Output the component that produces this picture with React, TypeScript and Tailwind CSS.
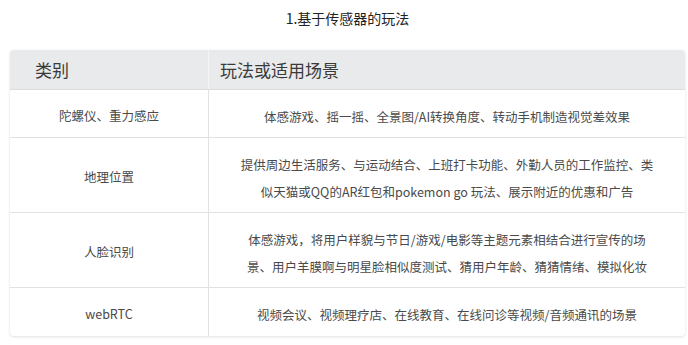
import React from "react";

const rows: { k: string; v: string[]; h: string }[] = [
  { k: "陀螺仪、重力感应", v: ["体感游戏、摇一摇、全景图/AI转换角度、转动手机制造视觉差效果"], h: "h-[48px]" },
  {
    k: "地理位置",
    v: [
      "提供周边生活服务、与运动结合、上班打卡功能、外勤人员的工作监控、类",
      "似天猫或QQ的AR红包和pokemon go 玩法、展示附近的优惠和广告",
    ],
    h: "h-[75px]",
  },
  {
    k: "人脸识别",
    v: [
      "体感游戏，将用户样貌与节日/游戏/电影等主题元素相结合进行宣传的场",
      "景、用户羊膜啊与明星脸相似度测试、猜用户年龄、猜猜情绪、模拟化妆",
    ],
    h: "h-[75px]",
  },
  { k: "webRTC", v: ["视频会议、视频理疗店、在线教育、在线问诊等视频/音频通讯的场景"], h: "h-[48px]" },
];

export default function App() {
  return (
    <div
      className="w-[688px] h-[345px] bg-white overflow-hidden"
      style={{ fontFamily: '"Noto Sans CJK SC", "Noto Sans", sans-serif' }}
    >
      <div className="h-[50px] pl-[10px] w-[685px] flex justify-center pt-[8px]">
        <div className="text-[14px] leading-[20px] text-[#222]">1.基于传感器的玩法</div>
      </div>
      <div className="ml-[10px] w-[675px] rounded-[4px] bg-white shadow-[0_1px_3px_rgba(0,0,0,0.12)] overflow-hidden">
        <div className="grid grid-cols-[199px_1fr] h-[40px] bg-[#e9eaeb] border-b border-[#dcdcdc]">
          <div className="flex items-center pl-[25px] border-r border-[#f4f4f4] text-[17px] text-[#3a3a3a]">类别</div>
          <div className="flex items-center pl-[11px] text-[17px] text-[#3a3a3a]">玩法或适用场景</div>
        </div>
        {rows.map((r, i) => (
          <div
            key={i}
            className={`grid grid-cols-[199px_1fr] ${r.h} ${i < rows.length - 1 ? "border-b border-[#e2e2e2]" : ""}`}
          >
            <div className="flex items-center justify-center pt-[5px] border-r border-[#e2e2e2] text-[12.5px] text-[#4a4a4a]">
              {r.k}
            </div>
            <div className="flex flex-col items-center justify-center pt-[5px] text-[12.5px] leading-[27px] text-[#4a4a4a]">
              {r.v.map((l, j) => (
                <div key={j} className="whitespace-nowrap">
                  {l}
                </div>
              ))}
            </div>
          </div>
        ))}
      </div>
    </div>
  );
}
